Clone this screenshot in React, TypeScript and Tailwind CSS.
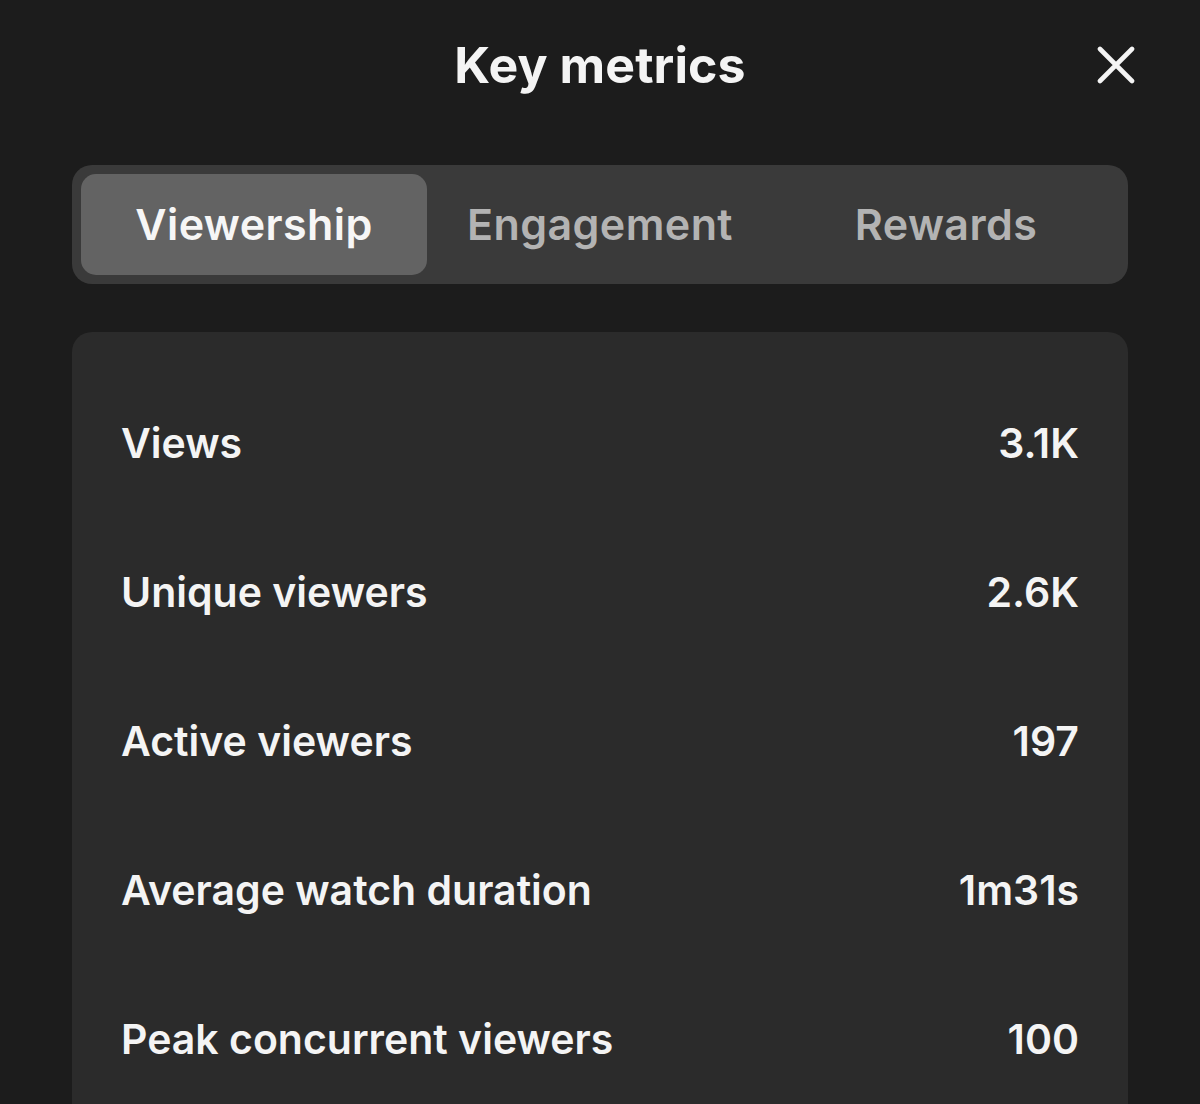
const TABS = ['Viewership', 'Engagement', 'Rewards'];

const METRICS = [
  { label: 'Views', value: '3.1K' },
  { label: 'Unique viewers', value: '2.6K' },
  { label: 'Active viewers', value: '197' },
  { label: 'Average watch duration', value: '1m31s' },
  { label: 'Peak concurrent viewers', value: '100' },
];

export default function App() {
  return (
    <div className="w-[1200px] h-[1104px] overflow-hidden bg-[#1c1c1c] text-[#f4f4f4] font-['Inter',sans-serif]">
      {/* Header */}
      <div className="relative h-[130px] flex items-center justify-center">
        <h1 className="text-[50px] font-bold tracking-[0.1px] leading-none">Key metrics</h1>
        <button className="absolute left-[1097px] top-[46px]" aria-label="Close">
          <svg width="38" height="38" viewBox="0 0 38 38" fill="none" stroke="#f4f4f4" strokeWidth="4.6" strokeLinecap="round">
            <path d="M3 3L35 35M35 3L3 35" />
          </svg>
        </button>
      </div>

      <div className="px-[72px] pt-[35px]">
        {/* Tabs */}
        <div className="grid grid-cols-3 p-[9px] rounded-[20px] bg-[#3a3a3a]">
          {TABS.map((tab, i) => (
            <div
              key={tab}
              className={
                i === 0
                  ? 'h-[101px] flex items-center justify-center rounded-[15px] bg-[#636363] text-[43px] tracking-[0.4px] font-semibold text-[#f6f6f6]'
                  : 'h-[101px] flex items-center justify-center text-[43px] tracking-[0.4px] font-semibold text-[#b3b3b3]'
              }
            >
              {tab}
            </div>
          ))}
        </div>

        {/* Metrics card */}
        <div className="mt-[48px] rounded-t-[20px] bg-[#2b2b2b] pt-[37px] px-[49px] pb-[40px]">
          {METRICS.map((m) => (
            <div key={m.label} className="h-[149px] flex items-center justify-between text-[41px] font-semibold">
              <span>{m.label}</span>
              <span>{m.value}</span>
            </div>
          ))}
        </div>
      </div>
    </div>
  );
}
